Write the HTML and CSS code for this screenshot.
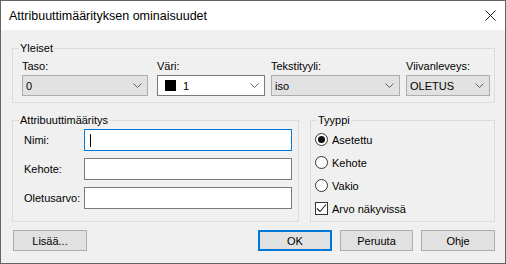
FILE: index.html
```html
<!DOCTYPE html>
<html lang="fi">
  <head>
    <meta charset="UTF-8" />
    <title>Attribuuttimäärityksen ominaisuudet</title>
    <link rel="stylesheet" href="styles.css">
  </head>
  <body>
    <div class="window">
      <div class="titlebar">
        <span class="title">Attribuuttimäärityksen ominaisuudet</span>
        <svg class="close" width="11" height="11" viewBox="0 0 11 11">
          <path d="M0.5 0.5L10.5 10.5M10.5 0.5L0.5 10.5" stroke="#1a1a1a" stroke-width="1" fill="none" />
        </svg>
      </div>

      <div class="content">
        <fieldset class="group group-general">
          <legend>Yleiset</legend>
          <div class="fields">
            <div class="field field-layer">
              <label>Taso:</label>
              <div class="combo">
                <span class="combo-text">0</span>
                <svg class="chevron" width="9" height="5" viewBox="0 0 9 5"><path d="M0.5 0.5L4.5 4.5L8.5 0.5" stroke="#606060" fill="none" /></svg>
              </div>
            </div>
            <div class="field field-color">
              <label>Väri:</label>
              <div class="combo combo-white">
                <span class="swatch"></span>
                <span class="combo-text">1</span>
                <svg class="chevron" width="9" height="5" viewBox="0 0 9 5"><path d="M0.5 0.5L4.5 4.5L8.5 0.5" stroke="#606060" fill="none" /></svg>
              </div>
            </div>
            <div class="field field-style">
              <label>Tekstityyli:</label>
              <div class="combo">
                <span class="combo-text">iso</span>
                <svg class="chevron" width="9" height="5" viewBox="0 0 9 5"><path d="M0.5 0.5L4.5 4.5L8.5 0.5" stroke="#606060" fill="none" /></svg>
              </div>
            </div>
            <div class="field field-weight">
              <label>Viivanleveys:</label>
              <div class="combo">
                <span class="combo-text">OLETUS</span>
                <svg class="chevron" width="9" height="5" viewBox="0 0 9 5"><path d="M0.5 0.5L4.5 4.5L8.5 0.5" stroke="#606060" fill="none" /></svg>
              </div>
            </div>
          </div>
        </fieldset>

        <div class="row">
          <fieldset class="group group-attr">
            <legend>Attribuuttimääritys</legend>
            <div class="form">
              <label>Nimi:</label>
              <div class="textbox focused"><span class="caret"></span></div>
              <label>Kehote:</label>
              <div class="textbox"></div>
              <label>Oletusarvo:</label>
              <div class="textbox"></div>
            </div>
          </fieldset>

          <fieldset class="group group-type">
            <legend>Tyyppi</legend>
            <div class="option"><span class="radio checked"></span>Asetettu</div>
            <div class="option"><span class="radio"></span>Kehote</div>
            <div class="option"><span class="radio"></span>Vakio</div>
            <div class="option">
              <span class="checkbox">
                <svg width="11" height="11" viewBox="0 0 11 11"><path d="M1 5.5L4 8.5L10 1.5" stroke="#222" stroke-width="1.1" fill="none" /></svg>
              </span>Arvo näkyvissä
            </div>
          </fieldset>
        </div>

        <div class="buttons">
          <button class="btn btn-more">Lisää...</button>
          <button class="btn btn-ok">OK</button>
          <button class="btn btn-cancel">Peruuta</button>
          <button class="btn btn-help">Ohje</button>
        </div>
      </div>
    </div>
  </body>
</html>
```

FILE: styles.css
```css
* {
  margin: 0px;
  box-sizing: border-box;
}

body {
  font-family: "Liberation Sans", Arial, sans-serif;
  font-size: 11px;
  color: #000;
}

.window {
  width: 506px;
  height: 264px;
  border: 1px solid #646464;
  display: flex;
  flex-direction: column;
}

.titlebar {
  height: 29px;
  background-color: #fff;
  display: flex;
  align-items: center;
  justify-content: space-between;
  padding: 0px 9px 0px 8px;
}

.title {
  font-size: 12.5px;
}

.close {
  display: block;
}

.content {
  flex: 1;
  background-color: #f0f0f0;
  padding: 10px 10px 0px 11px;
}

/* group boxes */
.group {
  border: 1px solid #dcdcdc;
  min-width: 0;
  padding: 0px 4px;
}

.group legend {
  padding: 0px 1px;
  margin-left: 2px;
  line-height: 16px;
}

.group-general {
  padding: 3px 4px 6px 4px;
}

.fields {
  display: flex;
  gap: 6px;
  padding-left: 5px;
}

.field label {
  display: block;
  line-height: 15px;
  margin-bottom: 1px;
}

.field-layer {
  width: 126px;
  margin-right: 3px;
}

.field-color {
  width: 108px;
}

.field-style {
  width: 129px;
}

.field-weight {
  width: 84px;
}

.combo {
  height: 21px;
  border: 1px solid #adadad;
  background-color: #e1e1e1;
  display: flex;
  align-items: center;
  padding: 0px 5px 0px 3px;
}

.combo-white {
  background-color: #fff;
  border-color: #7a7a7a;
  padding-left: 7px;
}

.combo-text {
  flex: 1;
}

.swatch {
  width: 11px;
  height: 11px;
  background-color: #000;
  margin-right: 7px;
}

.chevron {
  display: block;
}

.row {
  display: flex;
  gap: 11px;
  margin-top: 9px;
}

.group-attr {
  width: 287px;
  padding: 1px 6px 12px 4px;
}

.form {
  display: grid;
  grid-template-columns: 60px 208px;
  row-gap: 7px;
  align-items: center;
  padding-left: 7px;
}

.textbox {
  height: 22px;
  border: 1px solid #7a7a7a;
  background-color: #fff;
  display: flex;
  align-items: center;
  padding-left: 5px;
}

.textbox.focused {
  border-color: #0078d7;
}

.caret {
  width: 1px;
  height: 13px;
  background-color: #000;
}

.group-type {
  flex: 1;
}

.option {
  height: 23px;
  display: flex;
  align-items: center;
  gap: 4px;
}

.radio {
  width: 13px;
  height: 13px;
  border: 1px solid #333;
  border-radius: 50%;
  background-color: #fff;
  display: flex;
  align-items: center;
  justify-content: center;
}

.radio.checked::after {
  content: "";
  width: 7px;
  height: 7px;
  border-radius: 50%;
  background-color: #111;
}

.checkbox {
  width: 13px;
  height: 13px;
  border: 1px solid #333;
  background-color: #fff;
  display: flex;
  align-items: center;
  justify-content: center;
}

.checkbox svg {
  display: block;
}

/* bottom buttons */
.buttons {
  display: flex;
  gap: 8px;
  margin-top: 8px;
  padding-left: 1px;
}

.btn {
  height: 21px;
  width: 74px;
  border: 1px solid #adadad;
  background-color: #e1e1e1;
  font-family: "Liberation Sans", Arial, sans-serif;
  font-size: 11px;
  color: #000;
  padding: 0px;
}

.btn-ok {
  margin-left: auto;
  border: 2px solid #0078d7;
}

.btn-cancel {
  width: 73px;
}
```
